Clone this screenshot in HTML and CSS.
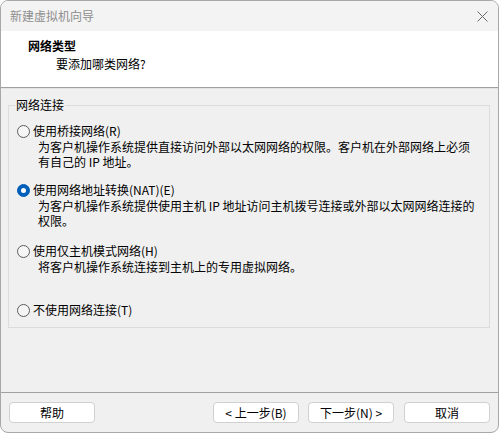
FILE: index.html
```html
<!DOCTYPE html>
<html lang="zh-CN">
<head>
    <meta charset="UTF-8">
    <title>新建虚拟机向导</title>
    <link rel="stylesheet" href="styles.css">
</head>
<body>
<div class="window">
    <div class="titlebar">
        <span class="title">新建虚拟机向导</span>
        <svg class="close" width="11" height="11" viewBox="0 0 11 11">
            <path d="M0.5 0.5 L10.5 10.5 M10.5 0.5 L0.5 10.5" stroke="#6a6a6a" stroke-width="1" fill="none"/>
        </svg>
    </div>

    <div class="header">
        <div class="header-title">网络类型</div>
        <div class="header-sub">要添加哪类网络?</div>
    </div>

    <div class="content">
        <fieldset class="group">
            <legend>网络连接</legend>

            <div class="option opt-bridge">
                <div class="radio-row"><span class="radio"></span>使用桥接网络(R)</div>
                <div class="desc">为客户机操作系统提供直接访问外部以太网网络的权限。客户机在外部网络上必须<br>有自己的 IP 地址。</div>
            </div>

            <div class="option opt-nat">
                <div class="radio-row"><span class="radio checked"></span>使用网络地址转换(NAT)(E)</div>
                <div class="desc">为客户机操作系统提供使用主机 IP 地址访问主机拨号连接或外部以太网网络连接的<br>权限。</div>
            </div>

            <div class="option opt-host">
                <div class="radio-row"><span class="radio"></span>使用仅主机模式网络(H)</div>
                <div class="desc">将客户机操作系统连接到主机上的专用虚拟网络。</div>
            </div>

            <div class="option opt-none">
                <div class="radio-row"><span class="radio"></span>不使用网络连接(T)</div>
            </div>
        </fieldset>
    </div>

    <div class="footer">
        <button class="btn">帮助</button>
        <div class="spacer"></div>
        <button class="btn">&lt; 上一步(B)</button>
        <button class="btn btn-next">下一步(N) &gt;</button>
        <button class="btn btn-cancel">取消</button>
    </div>
</div>
</body>
</html>
```

FILE: styles.css
```css
* {
    box-sizing: border-box;
}

body {
    margin: 0;
    background-color: #ffffff;
    font-family: "Noto Sans CJK SC", "Noto Sans", sans-serif;
    font-size: 12px;
    color: #000000;
}

.window {
    width: 499px;
    height: 433px;
    border: 1px solid #a8a8a8;
    border-radius: 8px;
    overflow: hidden;
    background-color: #f0f0f0;
    display: flex;
    flex-direction: column;
}

.titlebar {
    height: 30px;
    flex: none;
    background-color: #f3f3f3;
    display: flex;
    align-items: center;
    justify-content: space-between;
    padding: 0 10px 0 9px;
}

.title {
    color: #8e8e8e;
    line-height: 16px;
}

.header {
    height: 57px;
    flex: none;
    background-color: #ffffff;
    border-bottom: 1px solid #a0a0a0;
    padding-top: 7px;
}

.header-title {
    font-weight: bold;
    line-height: 16px;
    padding-left: 27px;
}

.header-sub {
    line-height: 16px;
    padding-left: 55px;
    margin-top: 2px;
}

.content {
    flex: 1;
    padding: 8px 8px 0 7px;
    border-top: 1px solid #e4e4e4;
}

.group {
    margin: 0;
    border: 1px solid #dcdcdc;
    padding: 10px 0 9px 8px;
}

.group legend {
    padding: 0 1px;
    margin-left: -2px;
    line-height: 16px;
}

.radio-row {
    display: flex;
    align-items: center;
    gap: 3px;
    line-height: 16px;
}

.radio {
    width: 13px;
    height: 13px;
    border: 1px solid #5c5c5c;
    border-radius: 50%;
    background-color: #f5f5f5;
    flex: none;
}

.radio.checked {
    border-color: #005fb8;
    background-color: #005fb8;
    display: flex;
    align-items: center;
    justify-content: center;
}

.radio.checked::after {
    content: "";
    width: 5px;
    height: 5px;
    border-radius: 50%;
    background-color: #ffffff;
}

.desc {
    margin-left: 21px;
    line-height: 15px;
    white-space: nowrap;
}

.opt-nat {
    margin-top: 13px;
}

.opt-host {
    margin-top: 15px;
}

.opt-none {
    margin-top: 28px;
}

.footer {
    flex: none;
    border-top: 1px solid #a0a0a0;
    display: flex;
    padding: 9px 8px 9px 8px;
}

.spacer {
    flex: 1;
}

.btn {
    width: 86px;
    height: 21px;
    background-color: #ffffff;
    border: 1px solid #d0d0d0;
    border-radius: 4px;
    font-family: inherit;
    font-size: 12px;
    line-height: 16px;
    color: #000000;
    padding: 0;
}

.btn-next {
    margin-left: 9px;
}

.btn-cancel {
    margin-left: 10px;
}
```
